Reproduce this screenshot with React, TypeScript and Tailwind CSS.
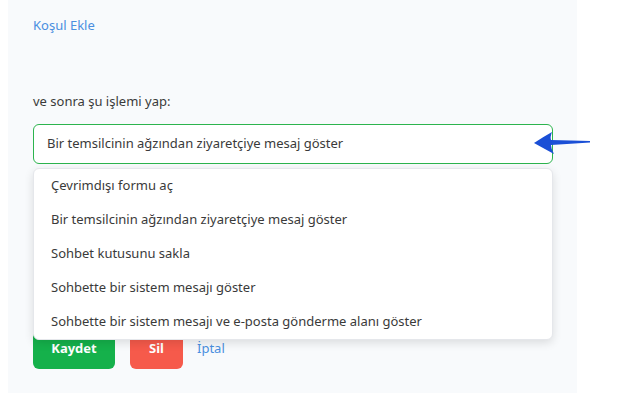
const options = [
  "Çevrimdışı formu aç",
  "Bir temsilcinin ağzından ziyaretçiye mesaj göster",
  "Sohbet kutusunu sakla",
  "Sohbette bir sistem mesajı göster",
  "Sohbette bir sistem mesajı ve e-posta gönderme alanı göster",
];

function PointerArrow() {
  return (
    <svg width="58" height="24" viewBox="0 0 58 24" className="absolute left-[525px] top-[131px]">
      <path d="M1 12 Q10 6 19 1 Q17 6 18 9 Q38 9.5 57 10 L57 11.5 Q38 12.5 18 14 Q18 18 21 23 Q10 17 1 12 Z" fill="#1a4fd6" />
    </svg>
  );
}

export default function App() {
  return (
    <div className="w-[630px] h-[395px] bg-white font-['Noto_Sans',sans-serif] text-[13px] text-[#3a3a3a]">
      <div className="relative ml-2 w-[569px] h-[393px] bg-[#f8fafc] px-[25px] pt-[16px]">
        <a className="text-[#4a8fe0]">Koşul Ekle</a>
        <p className="mt-[56px]">ve sonra şu işlemi yap:</p>
        <div className="mt-[13px] h-[40px] w-[520px] rounded-[6px] border border-[#2cb44e] bg-white flex items-center px-[13px]">
          <span>Bir temsilcinin ağzından ziyaretçiye mesaj göster</span>
        </div>
        <div className="relative mt-[4px] w-[520px]">
          <div className="absolute left-0 top-0 w-full rounded-[6px] border border-[#e5e7eb] bg-white shadow-[0_3px_10px_rgba(0,0,0,0.12)] z-10">
            {options.map((o) => (
              <div key={o} className="h-[34px] flex items-center px-[17px]">
                {o}
              </div>
            ))}
          </div>
          <div className="pt-[160px] flex items-center gap-[15px]">
            <button className="h-[41px] w-[82px] rounded-[6px] bg-[#15b14b] text-white font-bold">Kaydet</button>
            <div className="flex items-center gap-[14px]">
              <button className="h-[41px] w-[53px] rounded-[6px] bg-[#f65a4b] text-white font-bold">Sil</button>
              <a className="text-[#4a8fe0]">İptal</a>
            </div>
          </div>
        </div>
        <PointerArrow />
      </div>
    </div>
  );
}
